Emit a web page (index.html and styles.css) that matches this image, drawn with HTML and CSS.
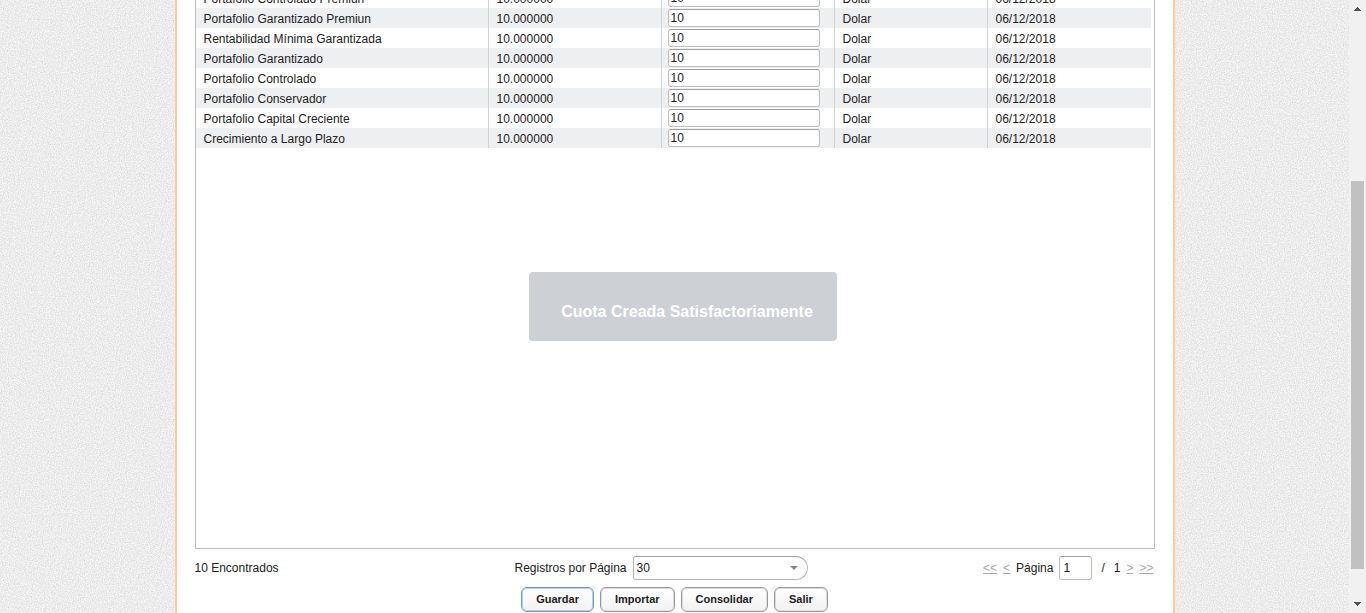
FILE: index.html
```html
<!DOCTYPE html>
<html lang="es">
<head>
<meta charset="utf-8">
<title>Cuotas</title>
<link rel="stylesheet" href="styles.css">
</head>
<body>
<div class="viewport">
  <svg class="texture" aria-hidden="true">
    <filter id="grain" x="0" y="0" width="100%" height="100%" color-interpolation-filters="sRGB">
      <feTurbulence type="fractalNoise" baseFrequency="0.83" numOctaves="3" seed="4"/>
      <feColorMatrix type="matrix" values="0.19 0 0 0 0.832  0.19 0 0 0 0.832  0.19 0 0 0 0.832  0 0 0 0 1"/>
    </filter>
    <rect width="100%" height="100%" filter="url(#grain)"/>
  </svg>
  <main class="panel">
    <div class="grid">
      <table class="quotas">
        <colgroup><col class="col-name"><col class="col-value"><col class="col-input"><col class="col-currency"><col></colgroup>
        <tbody>
          <tr><td>Portafolio Controlado Premiun</td><td>10.000000</td><td><input type="text" value="10" aria-label="Portafolio Controlado Premiun"></td><td>Dolar</td><td>06/12/2018</td></tr>
          <tr><td>Portafolio Garantizado Premiun</td><td>10.000000</td><td><input type="text" value="10" aria-label="Portafolio Garantizado Premiun"></td><td>Dolar</td><td>06/12/2018</td></tr>
          <tr><td>Rentabilidad Mínima Garantizada</td><td>10.000000</td><td><input type="text" value="10" aria-label="Rentabilidad Mínima Garantizada"></td><td>Dolar</td><td>06/12/2018</td></tr>
          <tr><td>Portafolio Garantizado</td><td>10.000000</td><td><input type="text" value="10" aria-label="Portafolio Garantizado"></td><td>Dolar</td><td>06/12/2018</td></tr>
          <tr><td>Portafolio Controlado</td><td>10.000000</td><td><input type="text" value="10" aria-label="Portafolio Controlado"></td><td>Dolar</td><td>06/12/2018</td></tr>
          <tr><td>Portafolio Conservador</td><td>10.000000</td><td><input type="text" value="10" aria-label="Portafolio Conservador"></td><td>Dolar</td><td>06/12/2018</td></tr>
          <tr><td>Portafolio Capital Creciente</td><td>10.000000</td><td><input type="text" value="10" aria-label="Portafolio Capital Creciente"></td><td>Dolar</td><td>06/12/2018</td></tr>
          <tr><td>Crecimiento a Largo Plazo</td><td>10.000000</td><td><input type="text" value="10" aria-label="Crecimiento a Largo Plazo"></td><td>Dolar</td><td>06/12/2018</td></tr>
        </tbody>
      </table>
    </div>
    <div class="footer">
      <span>10 Encontrados</span>
      <div class="page-size">
        <label for="size">Registros por Página</label>
        <span class="combo">
          <select id="size"><option>30</option></select>
          <svg class="caret" viewBox="0 0 8 4" aria-hidden="true"><path d="M0 0h8L4 4z"/></svg>
        </span>
      </div>
      <nav class="pager">
        <a href="#">&lt;&lt;</a>
        <a href="#">&lt;</a>
        <label for="page">Página</label>
        <input id="page" type="text" value="1">
        <span class="slash">/</span>
        <span>1</span>
        <a href="#">&gt;</a>
        <a href="#">&gt;&gt;</a>
      </nav>
    </div>
    <div class="actions">
      <button type="button" class="primary">Guardar</button>
      <button type="button">Importar</button>
      <button type="button">Consolidar</button>
      <button type="button">Salir</button>
    </div>
  </main>
</div>
<div class="scrollbar" aria-hidden="true">
  <svg class="arrow" viewBox="0 0 7 4"><path d="M3 0h1v1h1v1h1v1h1v1H0V3h1V2h1V1h1z"/></svg>
  <div class="track"><div class="thumb"></div></div>
  <svg class="arrow" viewBox="0 0 7 4"><path d="M0 0h7v1H6v1H5v1H4v1H3V3H2V2H1V1H0z"/></svg>
</div>
<div class="overlay">
  <div class="toast" role="status">Cuota Creada Satisfactoriamente</div>
</div>
</body>
</html>
```
FILE: styles.css
```css
* { box-sizing: border-box; }

body {
  margin: 0;
  display: flex;
  height: 100vh;
  overflow: hidden;
  font: 12px/20px "Liberation Sans", Arial, sans-serif;
  color: #222;
}

input, select, button { font: inherit; color: inherit; }

.viewport {
  flex: 1;
  position: relative;
  display: flex;
  justify-content: center;
  overflow: hidden;
  background: #ececec;
}

.texture {
  position: absolute;
  inset: 0;
  width: 100%;
  height: 100%;
}

.panel {
  position: relative;
  flex: 0 1 1000px;
  display: flex;
  flex-direction: column;
  margin-top: -12px;
  padding: 0 18px;
  border: solid #fc9;
  border-width: 0 2px;
  background: #fff;
}

.grid {
  flex: 1;
  padding-right: 3px;
  border: 1px solid #bfbfbf;
  border-top: 0;
}

.quotas {
  width: 100%;
  table-layout: fixed;
  border-collapse: separate;
  border-spacing: 0;
}

.col-name { width: 293px; }
.col-value, .col-input { width: 173px; }
.col-currency { width: 153px; }

.quotas tr:nth-child(even) { background: #eeeff1; }

.quotas td {
  height: 20px;
  padding: 2px 8px 0;
  line-height: 18px;
  border-right: 1px solid #d0d3d6;
}
.quotas td:last-child { border-right: 0; }
.quotas td:nth-child(3) { padding: 0 6px; vertical-align: top; }

.quotas input, .pager input {
  display: block;
  background: #fff;
  border: 1px solid #c0c0c0;
  border-top-color: #a0a0a0;
  border-radius: 3px;
}
.quotas input {
  width: 152px;
  height: 18px;
  margin-top: 1px;
  padding: 0 2px;
}

.footer {
  display: grid;
  grid-template-columns: 1fr auto 1fr;
  align-items: center;
  height: 38px;
}

.page-size { display: flex; align-items: center; gap: 6px; margin-right: 27px; }

.combo { display: grid; align-items: center; }
.combo > * { grid-area: 1 / 1; }
.combo select {
  appearance: none;
  width: 175px;
  height: 24px;
  padding: 0 3px;
  border: 1px solid #b8b8b8;
  border-top-color: #a0a0a0;
  border-radius: 3px 12px 12px 3px;
  background: #fff;
}
.caret { justify-self: end; width: 8px; height: 4px; margin-right: 10px; fill: #888; }

.pager { display: flex; align-items: center; justify-content: flex-end; gap: 6px; padding-right: 1px; }
.pager a { color: #aaa; }
.pager input { width: 33px; height: 24px; padding: 0 3px; }
.slash { margin: 0 3px; }

.actions {
  display: flex;
  justify-content: center;
  gap: 6px;
  height: 26px;
}
.actions button {
  height: 25px;
  padding: 0 14px 2px;
  font-size: 11px;
  font-weight: bold;
  border: 1px solid #999;
  border-radius: 6px;
  background: linear-gradient(#fff, #f2f2f2);
  box-shadow: inset 0 0 0 1px #ddd;
}
.actions .primary { border-color: #6a9bcd; box-shadow: inset 0 0 0 1px #b5d3f0; }

.overlay {
  position: fixed;
  inset: 0;
  display: flex;
  align-items: center;
  justify-content: center;
  pointer-events: none;
}
.toast {
  padding: 30px 24px 19px 32px;
  border-radius: 4px;
  background: #cdd0d5;
  color: #fff;
  font-size: 16px;
  font-weight: bold;
}

.scrollbar {
  width: 17px;
  display: flex;
  flex-direction: column;
  align-items: center;
  padding: 7px 0;
  background: #f1f1f1;
}
.arrow { width: 7px; height: 4px; fill: #505050; shape-rendering: crispEdges; }
.track { flex: 1; width: 13px; display: flex; flex-direction: column; justify-content: flex-end; padding-bottom: 33px; }
.thumb { height: 388px; background: #c1c1c1; }
```
